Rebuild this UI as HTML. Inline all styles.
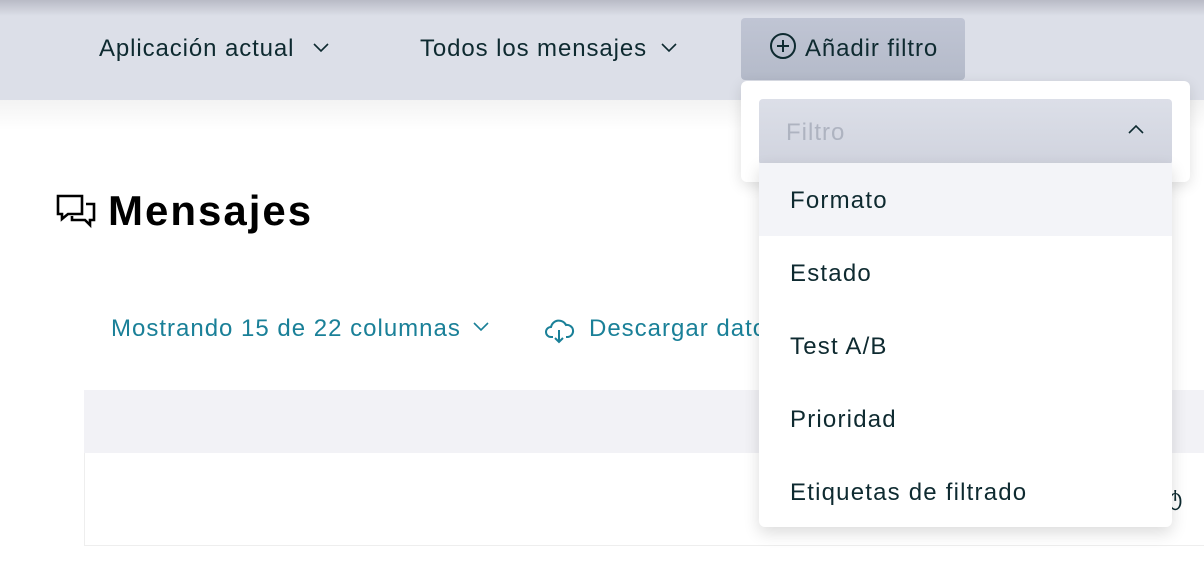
<!DOCTYPE html>
<html><head><meta charset="utf-8"><style>
*{margin:0;padding:0;box-sizing:border-box}
body{width:1204px;height:568px;overflow:hidden;background:#fff;font-family:"Liberation Sans",sans-serif;position:relative;color:#0e2a30}
.hdr{position:absolute;left:0;top:0;width:1204px;height:100px;background:#dcdfe8}
.hdr:before{content:"";position:absolute;left:0;top:0;right:0;height:16px;background:linear-gradient(#b9bbc6,rgba(220,223,232,0))}
.below{position:absolute;left:0;top:100px;width:1204px;height:30px;background:linear-gradient(#f3f3f3,#fff)}
.t{position:absolute;white-space:nowrap}
.nav{font-size:24px;top:35px;letter-spacing:0.9px}
.btn{position:absolute;left:741px;top:18px;width:224px;height:62px;background:linear-gradient(#c0c5d4,#b4bac9);border-radius:4px}
.panel{position:absolute;left:741px;top:81px;width:449px;height:101px;background:#fff;border-radius:6px;box-shadow:0 4px 14px rgba(0,0,0,.12)}
.sel{position:absolute;left:759px;top:99px;width:413px;height:66px;background:linear-gradient(#dcdfe8,#d0d3de);border-radius:4px}
.menu{position:absolute;left:759px;top:163px;width:413px;height:364px;background:#fff;border-radius:0 0 6px 6px;box-shadow:0 6px 16px rgba(0,0,0,.14)}
.it{height:73px;line-height:75px;padding-left:31px;font-size:24px;letter-spacing:1.2px;color:#0e2a30}
.teal{color:#1a8098;font-size:24px;letter-spacing:1px}
</style></head><body>
<div class="hdr"></div>
<div class="below"></div>
<div class="t nav" style="left:99px">Aplicación actual</div>
<svg class="t" style="left:313px;top:43px" width="16" height="10"><path d="M1 1l7 7 7-7" fill="none" stroke="#0e2a30" stroke-width="1.6"/></svg>
<div class="t nav" style="left:420px">Todos los mensajes</div>
<svg class="t" style="left:661px;top:43px" width="16" height="10"><path d="M1 1l7 7 7-7" fill="none" stroke="#0e2a30" stroke-width="1.6"/></svg>
<div class="btn"></div>
<svg class="t" style="left:769px;top:32px" width="28" height="28"><circle cx="14" cy="14" r="12" fill="none" stroke="#0e2a30" stroke-width="2"/><path d="M14 8v12M8 14h12" stroke="#0e2a30" stroke-width="2"/></svg>
<div class="t nav" style="left:805px">Añadir filtro</div>

<svg class="t" style="left:56px;top:194px" width="40" height="36"><path d="M2 2h24v18H12l-6 5v-5H2z" fill="none" stroke="#000" stroke-width="2.6"/><path d="M30 10h8v16h-4v5l-5-5H16v-4" fill="none" stroke="#000" stroke-width="2.6"/></svg>
<div class="t" style="left:108px;top:187px;font-size:42px;font-weight:bold;color:#000;letter-spacing:2px">Mensajes</div>

<div class="t teal" style="left:111px;top:315px">Mostrando 15 de 22 columnas</div>
<svg class="t" style="left:473px;top:322px" width="16" height="10"><path d="M1 1l7 7 7-7" fill="none" stroke="#1a8098" stroke-width="1.6"/></svg>
<svg class="t" style="left:545px;top:317px" width="30" height="28"><path d="M8 20H6a5 5 0 0 1 0-10 8 8 0 0 1 15-2 6 6 0 0 1 2 12h-2M14 13v12M10 21l4 4 4-4" fill="none" stroke="#1a8098" stroke-width="2"/></svg>
<div class="t teal" style="left:589px;top:315px">Descargar datos</div>

<div style="position:absolute;left:84px;top:390px;width:1120px;height:156px;border:1px solid #eee;border-right:none;border-top:none"></div>
<div style="position:absolute;left:84px;top:390px;width:1120px;height:63px;background:#f2f2f6"></div>
<div class="t" style="left:1168px;top:485px;font-size:22px;color:#0e2a30">ტ</div>

<div class="panel"></div>
<div class="sel"></div>
<div class="t" style="left:786px;top:119px;font-size:24px;letter-spacing:1px;color:#aeb3c0">Filtro</div>
<svg class="t" style="left:1128px;top:124px" width="16" height="10"><path d="M1 9l7-7 7 7" fill="none" stroke="#0e2a30" stroke-width="1.6"/></svg>
<div class="menu">
<div class="it" style="background:#f3f4f8">Formato</div>
<div class="it">Estado</div>
<div class="it">Test A/B</div>
<div class="it">Prioridad</div>
<div class="it">Etiquetas de filtrado</div>
</div>
</body></html>
